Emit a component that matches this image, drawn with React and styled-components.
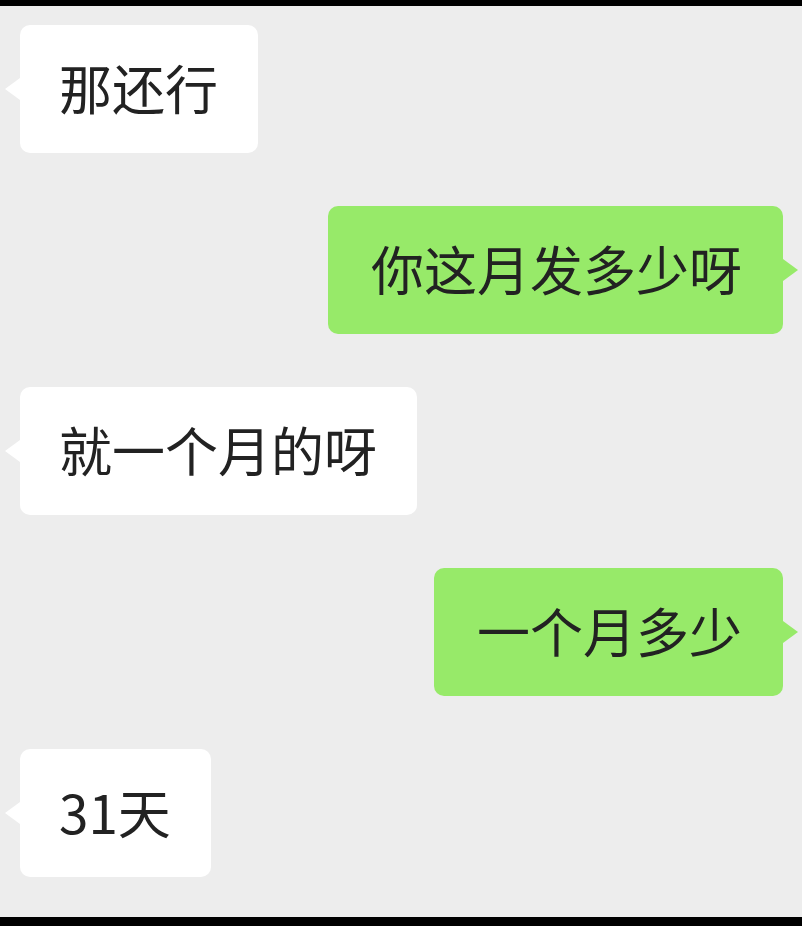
import React from 'react';
import styled, { createGlobalStyle, css } from 'styled-components';

const GlobalStyle = createGlobalStyle`
  html, body {
    margin: 0;
    padding: 0;
    background: #000;
  }
`;

const Screen = styled.div`
  margin-top: 6px;
  height: 911px;
  box-sizing: border-box;
  background: #ededed;
  padding-top: 19px;
  display: flex;
  flex-direction: column;
  gap: 53px;
  font-family: "Noto Sans CJK SC", "Noto Sans", sans-serif;
`;

const Row = styled.div`
  display: flex;
  justify-content: ${(p) => (p.$mine ? 'flex-end' : 'flex-start')};
  padding: 0 19px 0 20px;
`;

const Bubble = styled.div`
  position: relative;
  height: 128px;
  box-sizing: border-box;
  padding: ${(p) => (p.$mine ? '0 41px 4px 43px' : '0 40px 4px 39px')};
  display: flex;
  align-items: center;
  border-radius: 10px;
  font-size: 53px;
  color: #222;
  background: ${(p) => (p.$mine ? '#97ea69' : '#ffffff')};

  &::before {
    content: '';
    position: absolute;
    top: 50%;
    transform: translateY(-50%);
    border-top: 11px solid transparent;
    border-bottom: 11px solid transparent;
    ${(p) =>
      p.$mine
        ? css`
            right: -15px;
            border-left: 15px solid #97ea69;
          `
        : css`
            left: -15px;
            border-right: 15px solid #ffffff;
          `}
  }
`;

const messages = [
  { id: 1, mine: false, text: '那还行' },
  { id: 2, mine: true, text: '你这月发多少呀' },
  { id: 3, mine: false, text: '就一个月的呀' },
  { id: 4, mine: true, text: '一个月多少' },
  { id: 5, mine: false, text: '31天' },
];

export default function App() {
  return (
    <>
      <GlobalStyle />
      <Screen>
        {messages.map((m) => (
          <Row key={m.id} $mine={m.mine}>
            <Bubble $mine={m.mine}>{m.text}</Bubble>
          </Row>
        ))}
      </Screen>
    </>
  );
}
